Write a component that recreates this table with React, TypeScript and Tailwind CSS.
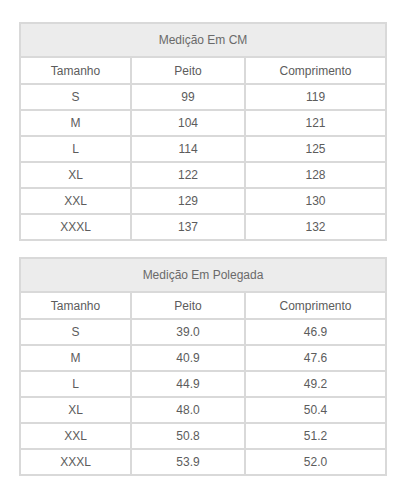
const cm = [
	["S", "99", "119"],
	["M", "104", "121"],
	["L", "114", "125"],
	["XL", "122", "128"],
	["XXL", "129", "130"],
	["XXXL", "137", "132"],
];

const pol = [
	["S", "39.0", "46.9"],
	["M", "40.9", "47.6"],
	["L", "44.9", "49.2"],
	["XL", "48.0", "50.4"],
	["XXL", "50.8", "51.2"],
	["XXXL", "53.9", "52.0"],
];

function SizeTable({ title, rows }: { title: string; rows: string[][] }) {
	return (
		<table className="w-[368px] border-collapse border-2 border-[#d9d9d9] text-[12px] text-[#5c5c5c] text-center">
			<thead>
				<tr>
					<th colSpan={3} className="h-[34px] bg-[#ececec] border-2 border-[#d9d9d9] font-normal text-[#6a6a6a]">
						{title}
					</th>
				</tr>
			</thead>
			<tbody>
				<tr className="h-[27px]">
					<td className="w-[111px] border-2 border-[#d9d9d9]">Tamanho</td>
					<td className="w-[114px] border-2 border-[#d9d9d9]">Peito</td>
					<td className="border-2 border-[#d9d9d9]">Comprimento</td>
				</tr>
				{rows.map((r) => (
					<tr key={r[0]} className="h-[26px]">
						{r.map((c, i) => (
							<td key={i} className="border-2 border-[#d9d9d9]">
								{c}
							</td>
						))}
					</tr>
				))}
			</tbody>
		</table>
	);
}

export default function App() {
	return (
		<div className="w-[406px] h-[500px] bg-white pt-[22px] pl-[19px] flex flex-col gap-[16px] font-['Liberation_Sans',Arial,sans-serif]">
			<SizeTable title="Medição Em CM" rows={cm} />
			<SizeTable title="Medição Em Polegada" rows={pol} />
		</div>
	);
}
